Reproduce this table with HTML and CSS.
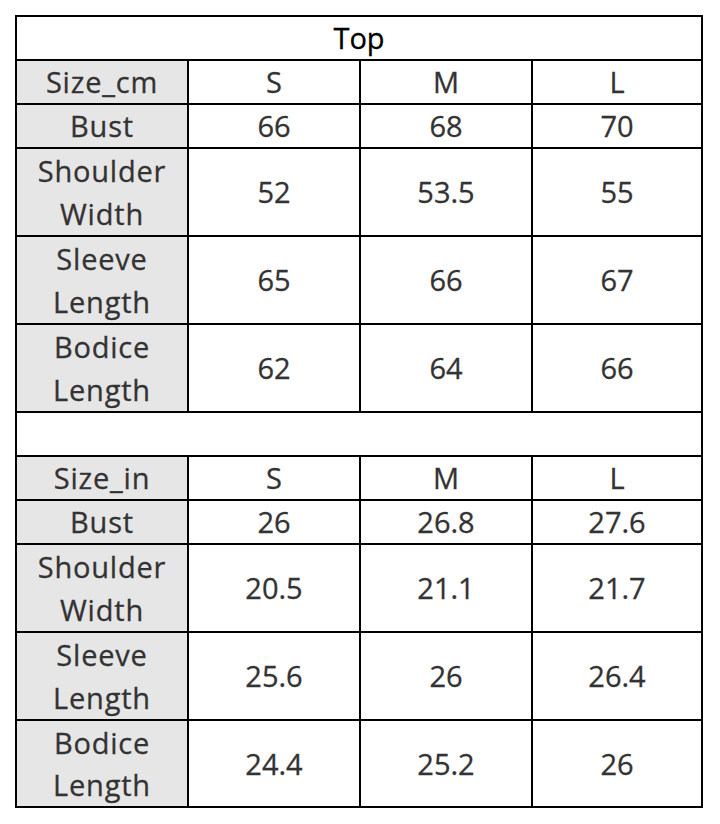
FILE: index.html
```html
<!DOCTYPE html>
<html lang="en">
<head>
<meta charset="utf-8">
<title>Top size chart</title>
<link rel="stylesheet" href="styles.css">
</head>
<body>
<table class="chart">
  <colgroup>
    <col class="c-label">
    <col class="c-val">
    <col class="c-val">
    <col class="c-last">
  </colgroup>
  <tbody>
    <tr class="r1"><td class="title" colspan="4">Top</td></tr>
    <tr class="r1"><th>Size_cm</th><td>S</td><td>M</td><td>L</td></tr>
    <tr class="r1"><th>Bust</th><td>66</td><td>68</td><td>70</td></tr>
    <tr class="r2"><th>Shoulder<br>Width</th><td>52</td><td>53.5</td><td>55</td></tr>
    <tr class="r2"><th>Sleeve<br>Length</th><td>65</td><td>66</td><td>67</td></tr>
    <tr class="r2"><th>Bodice<br>Length</th><td>62</td><td>64</td><td>66</td></tr>
    <tr class="r1"><td class="blank" colspan="4"></td></tr>
    <tr class="r1"><th>Size_in</th><td>S</td><td>M</td><td>L</td></tr>
    <tr class="r1"><th>Bust</th><td>26</td><td>26.8</td><td>27.6</td></tr>
    <tr class="r2"><th>Shoulder<br>Width</th><td>20.5</td><td>21.1</td><td>21.7</td></tr>
    <tr class="r2"><th>Sleeve<br>Length</th><td>25.6</td><td>26</td><td>26.4</td></tr>
    <tr class="r2 last"><th>Bodice<br>Length</th><td>24.4</td><td>25.2</td><td>26</td></tr>
  </tbody>
</table>
</body>
</html>
```
FILE: styles.css
```css
html, body {
  margin: 0;
  padding: 0;
  background: #ffffff;
}

body {
  padding: 15px 0 0 15px;
}

.chart {
  border-collapse: separate;
  border-spacing: 0;
  table-layout: fixed;
  width: 688px;
  border-top: 2px solid #000;
  border-left: 2px solid #000;
  font-family: "Open Sans", "Noto Sans", sans-serif;
  font-size: 29px;
  color: #333333;
}

.c-label, .c-val { width: 172px; }
.c-last { width: 170px; }

.chart th,
.chart td {
  padding: 0;
  border-right: 2px solid #000;
  border-bottom: 2px solid #000;
  text-align: center;
  vertical-align: middle;
  font-weight: 400;
  line-height: 42px;
  overflow: hidden;
  white-space: nowrap;
  -webkit-text-stroke: 0.3px #333333;
}

.chart th {
  background: #e7e6e6;
  letter-spacing: 0.8px;
}

.r1 { height: 44px; }
.r2 { height: 88px; }
.r2 th { line-height: 43px; }
.r2.last { height: 87px; }
.r2.last th { line-height: 42px; }

.chart .title {
  color: #000;
  -webkit-text-stroke: 0.3px #000;
}
```
